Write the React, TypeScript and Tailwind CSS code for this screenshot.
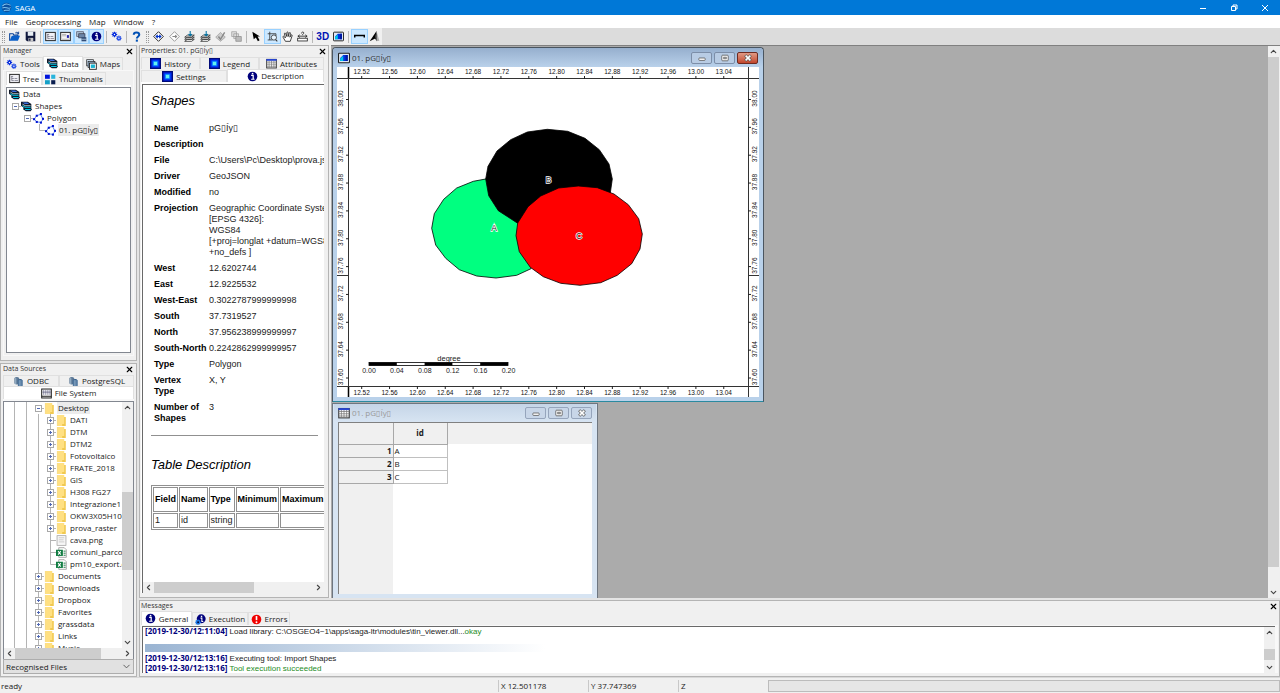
import React from "react";
import { ChevronDown, ChevronLeft, ChevronRight, ChevronUp, X } from "lucide-react";

const LAYER = "pG▯Íy▯";

type IconProps = { className?: string };
const I = ({ children, className = "size-[11px]" }: { children: React.ReactNode; className?: string }) => (
  <svg viewBox="0 0 16 16" className={`${className} shrink-0`} aria-hidden="true">{children}</svg>
);

/* ---------- icons ---------- */
const OpenIcon = () => (
  <I><path d="M1 14V4h5l1 2h6v2" fill="none" stroke="#003c96" strokeWidth="1.5" /><path d="M1 14l3-7h12l-3 7z" fill="#0a5fc8" /><path d="M9 3c2-2 4-1 5 1M14 1v3h-3" fill="none" stroke="#0a3c8c" strokeWidth="1.3" /></I>
);
const SaveIcon = () => (
  <I><path d="M1 1h14v14H3l-2-2z" fill="#10183c" /><path d="M4 1h8v6H4z" fill="#e8eef4" /><path d="M5 10h7v5H5z" fill="#c8c8c8" /><path d="M6 11h2v3H6z" fill="#10183c" /></I>
);
const TreeWinIcon = (p: IconProps) => (
  <I {...p}><rect x="1" y="2" width="14" height="12" fill="#f0f0f6" stroke="#222" strokeWidth="1.4" /><path d="M3 5h3M4 5v6h3M4 8h3M8 8h4M8 11h5" stroke="#667" fill="none" /></I>
);
const PropWinIcon = () => (
  <I><rect x="1" y="2" width="14" height="12" fill="#f4f4f4" stroke="#222" strokeWidth="1.4" /><path d="M3 5h6M3 7h6M3 12h10" stroke="#999" /><rect x="10" y="6" width="3" height="4" fill="#22a" /></I>
);
const SourceIcon = () => (
  <I><rect x="1" y="1" width="10" height="7" fill="#a8bcd0" stroke="#556" /><rect x="4" y="4" width="9" height="6" fill="#6d86a8" stroke="#334" /><path d="M8 9h7v6H8z" fill="#334e78" /><path d="M8 12h7" stroke="#cde" /></I>
);
const InfoIcon = () => (
  <I><circle cx="8" cy="8" r="7" fill="#00007c" /><path d="M6 6.5h3v5M6 12h5" stroke="#fff" strokeWidth="1.8" fill="none" /><rect x="7" y="2.7" width="2.2" height="2.2" fill="#fff" /></I>
);
const ExecIcon = () => (
  <I><circle cx="9" cy="7" r="6.5" fill="#00007c" /><path d="M8 6h2v5h2" stroke="#fff" strokeWidth="1.5" fill="none" /><rect x="8.500" y="2.500" width="2" height="2" fill="#fff" /><path d="M4.500 7.500l1.200 1.500 2-.3-.3 2L9 12l-1.600 1.300.3 2-2-.3-1.200 1.500L3 15l-2 .3.300-2L0 12l1.300-1.300-.3-2 2 .3z" fill="#1e78e6" /><circle cx="4.500" cy="12" r="1.300" fill="#003" /></I>
);
const ErrorIcon = () => (
  <I><circle cx="8" cy="8" r="7" fill="#f00000" /><path d="M8 3v6" stroke="#fff" strokeWidth="2.4" /><circle cx="8" cy="12" r="1.4" fill="#fff" /></I>
);
const CogsIcon = () => (
  <I>
    <path d="M5 1v8M1 5h8M2.200 2.200l5.600 5.600M7.800 2.200L2.200 7.800" stroke="#0028dc" strokeWidth="1.600" />
    <circle cx="5" cy="5" r="2.400" fill="#0028dc" />
    <circle cx="5" cy="5" r="1" fill="#fff" />
    <path d="M11.500 6.500v8M7.500 10.500h8M8.700 7.700l5.600 5.600M14.300 7.700l-5.600 5.600" stroke="#2850e6" strokeWidth="1.600" />
    <circle cx="11.500" cy="10.500" r="2.600" fill="#2850e6" />
    <circle cx="11.500" cy="10.500" r="1" fill="#fff" />
  </I>
);
const HelpIcon = () => (
  <I><path d="M4 5.500C4 1 12 1 12 5.500 12 8 8.500 8 8.500 11" fill="none" stroke="#0050b4" strokeWidth="3" /><rect x="7" y="12.500" width="3" height="3" fill="#0050b4" /></I>
);
const DiamondIcon = ({ active }: { active?: boolean }) => (
  <I><path d="M8 1l7 7-7 7-7-7z" fill="#fff" stroke={active ? "#222" : "#999"} strokeWidth="1.400" /><path d={active ? "M4.500 8h7M7 5.500L4.500 8 7 10.500M9 5.500l2.500 2.500L9 10.500" : "M5 8h6M9 6l2 2-2 2"} stroke={active ? "#0032c8" : "#888"} fill="none" strokeWidth="1.600" /></I>
);
const LayersArrowIcon = () => (
  <I><path d="M1 15l4-3h10l-4 3zM1 12l4-3h10l-4 3zM1 9l4-3h10l-4 3z" fill="#fff" stroke="#222" strokeWidth="1.100" /><path d="M9 0v7M6.500 4.500L9 7l2.500-2.500" stroke="#0070a0" strokeWidth="1.500" fill="none" /></I>
);
const CheckDiamondIcon = () => (
  <I><path d="M1 9l7-7 7 7-7 6z" fill="#ccc" stroke="#999" /><path d="M5 8l3 4 6-10" stroke="#888" strokeWidth="2" fill="none" /></I>
);
const CopyIcon = () => (
  <I><path d="M1 1h7v7H1zM4 4h7v7H4z" fill="#ddd" stroke="#999" /><path d="M7 8h8v7H7z" fill="#bbb" stroke="#888" /></I>
);
const PointerIcon = () => (
  <I><path d="M2 1l11 7H9.500l3 5.500-2.500 1.500-3-5.500L4 12z" fill="#000" /></I>
);
const ZoomIcon = () => (
  <I><path d="M4 1v12M1 4h12v3M1 13h7" stroke="#333" strokeWidth="1.200" fill="none" /><circle cx="10" cy="9.500" r="3.800" fill="#e6f4ff" stroke="#333" strokeWidth="1.200" /><path d="M12.500 12.500L15 15" stroke="#333" strokeWidth="1.600" /></I>
);
const HandIcon = () => (
  <I><path d="M5 15L1.500 9c-.5-1.500 1-2 2-.5L5 10 3.500 4c0-1.500 1.500-1.500 2 0L7 8V2.500c0-1.500 2-1.500 2 0V8l1.500-5c.5-1.300 2-1 1.800.4L11.500 9l1.700-3c.8-1 2-.4 1.500 1L12 15z" fill="#fff" stroke="#222" strokeWidth="1.200" /></I>
);
const MeasureIcon = () => (
  <I><rect x="1" y="10.500" width="14" height="4" fill="#fff" stroke="#222" strokeWidth="1.200" /><path d="M1 7.500h14M4 5.500l-2.500 2L4 9.500M12 5.500l2.500 2-2.500 2M6.500 3.500C6.500 1 10 1 10 3c0 1-2 1-2 3" fill="none" stroke="#222" strokeWidth="1.200" /></I>
);
const MapIcon = (p: IconProps) => (
  <I {...p}><rect x=".7" y="1.700" width="14.600" height="12.600" rx="1" fill="#dfe8f4" stroke="#222" strokeWidth="1.400" /><path d="M3 12V8l4-4h6v8z" fill="#0030e0" /><path d="M3 12V8.500L7 5v7z" fill="#00c8e8" /><path d="M10 4h3v8h-3z" fill="#0018a0" /></I>
);
const LineIcon = () => (
  <I><path d="M1 9.500v-3h14v3" stroke="#000" strokeWidth="2.200" fill="none" /></I>
);
const NorthIcon = () => (
  <I><path d="M11 0L1 15l8-4z" fill="#000" /><path d="M11 0v15l4-1z" fill="#b0b0b0" /><path d="M11 0v15l-2-4z" fill="#000" /></I>
);
const LayersIcon = () => (
  <I>
    <path d="M4 9h9l3 3-2 3H7l-4-3z" fill="#0c1c30" />
    <path d="M0 1h10l5 3.500V11H5.500L0 7z" fill="#101828" />
    <path d="M2 2h7l3 2.300H5.500z" fill="#3c6ee0" />
    <path d="M2 4.500l4 2.300h8" stroke="#e8f8ff" fill="none" />
    <path d="M2 6.800l4 2.400h8M6 12.500h8" stroke="#00c8e6" strokeWidth="1.500" fill="none" />
  </I>
);
const MapsIcon = () => (
  <I><rect x="1" y="1" width="10" height="9" fill="#cde" stroke="#222" /><rect x="3" y="3.500" width="10" height="9" fill="#9bd" stroke="#222" /><rect x="5" y="6" width="10" height="9" fill="#fff" stroke="#222" strokeWidth="1.300" /><rect x="7" y="8" width="6" height="5" fill="#1ab4d2" /></I>
);
const ThumbsIcon = () => (
  <I><rect x="0" y="1" width="7" height="6" fill="#0014dc" /><rect x="9" y="1" width="6" height="6" fill="#28b4dc" /><rect x="0" y="9" width="7" height="6" fill="#14a0c8" /><rect x="9" y="9" width="6" height="6" fill="#0a1e50" /></I>
);
const PolygonIcon = () => (
  <I><path d="M2 9l3-5 6-2 3.500 7-3 4.500L5.500 13z" fill="#fff" stroke="#5a86ee" strokeWidth="1.400" /><g fill="#0014d2"><rect x="0" y="7.500" width="3" height="3" /><rect x="4" y="2.500" width="3" height="3" /><rect x="10" y="0" width="3" height="3" /><rect x="13" y="7" width="3" height="3" /><rect x="10" y="12.500" width="3" height="3" /><rect x="4" y="11.500" width="3" height="3" /></g></I>
);
const SquareIcon = () => (
  <I><rect x="1" y="1" width="14" height="14" fill="#0028f0" stroke="#000a78" strokeWidth="2" /><rect x="4" y="4" width="8" height="8" fill="#0078ff" /><rect x="5.500" y="5.500" width="5" height="5" fill="#64f0f0" /></I>
);
const GridIcon = (p: IconProps) => (
  <I {...p}><rect x="1" y="2" width="14" height="12.500" fill="#fff" stroke="#333" strokeWidth="1.400" /><path d="M1 6h14M1 9h14M1 12h14M4.500 4v10M8 4v10M11.500 4v10" stroke="#777" /><path d="M.5 2.800h15" stroke="#2846d2" strokeWidth="2.600" /></I>
);
const DbIcon = () => (
  <I><path d="M2 3c2-2 5-2 7 0v8c-2 2-5 2-7 0z" fill="#5c7896" /><path d="M7 6c2-2 5-2 7 0v8c-2 2-5 2-7 0z" fill="#2e5a88" /><path d="M4 3v9M9 6v9M11.500 6v9" stroke="#c8dceb" /></I>
);
const FsIcon = () => (
  <I><rect x="1" y="1.500" width="14" height="13" fill="#fff" stroke="#222" strokeWidth="1.500" /><path d="M4 3v7M7 3v7M10 3v7M13 3v7M2 6h12" stroke="#557" /><path d="M1 12h14" stroke="#222" strokeWidth="1.500" /></I>
);
const FolderIcon = () => (
  <I><path d="M2 0h10v3h2v13H2z" fill="#ffe082" /><path d="M12 3h2v13H9v-3h3z" fill="#f0c850" /><path d="M2 0v16" stroke="#f5d46e" /></I>
);
const FileIcon = () => (
  <I><rect x="1.500" y="1" width="13" height="14" fill="#f6f6f6" stroke="#999" /><path d="M4 4h8M4 7h7M4 10h8" stroke="#bbb" /></I>
);
const XlsIcon = () => (
  <I><path d="M4 1h8l3 3v11H4z" fill="#fff" stroke="#888" /><path d="M11 6h3M11 9h3M11 12h3" stroke="#1e7846" strokeWidth="1.400" /><rect x="0" y="4" width="10" height="9" fill="#107c41" /><path d="M3 6l4 5M7 6l-4 5" stroke="#fff" strokeWidth="1.500" /></I>
);
const SagaIcon = () => (
  <I><circle cx="8" cy="8" r="7" fill="#0a50a0" /><path d="M2 6c4-5 9-3 12-1M2 9c4-4 8 3 12-1M4 13c3-3 6 1 9-2" stroke="#7fc4f0" strokeWidth="1.500" fill="none" /></I>
);

/* ---------- small building blocks ---------- */
const ToolButton = ({ label, on, children }: { label: string; on?: boolean; children: React.ReactNode }) => (
  <button aria-label={label} aria-pressed={on} className={`flex flex-1 items-center justify-center ${on ? "border border-[#99d1ff] bg-[#cce8ff]" : ""}`}>{children}</button>
);
const Sep = () => <div className="mx-0.5 h-3 w-px shrink-0 bg-[#b8b8b8]" />;
const Grip = () => <div className="mx-0.5 h-3 w-[3px] shrink-0 border-x border-dotted border-[#999]" />;

const Tab = ({ icon, label, on, className = "" }: { icon: React.ReactNode; label: string; on?: boolean; className?: string }) => (
  <button role="tab" aria-selected={!!on} className={`flex items-center justify-center gap-[3px] whitespace-nowrap border border-b-0 border-[#e0e0e0] px-0.5 ${on ? "bg-white" : "bg-[#f0f0f0]"} ${className}`}>
    {icon}
    {label}
  </button>
);

const Caption = ({ children }: { children: React.ReactNode }) => (
  <div className="flex h-[10px] shrink-0 items-center justify-between text-[7px] leading-[10px] text-[#333]">
    <span>{children}</span>
    <button aria-label="Close panel"><X className="size-[9px] text-black" strokeWidth={3} /></button>
  </div>
);

const VScroll = ({ before, thumb, after }: { before: string; thumb: string; after: string }) => (
  <div className="flex w-[11px] shrink-0 flex-col items-center bg-[#f0f0f0] text-[#444]">
    <ChevronUp className="my-px size-[9px] shrink-0" strokeWidth={3} />
    <div className={before} />
    <div className={`w-full bg-[#cdcdcd] ${thumb}`} />
    <div className={after} />
    <ChevronDown className="my-px size-[9px] shrink-0" strokeWidth={3} />
  </div>
);
const HScroll = ({ thumb }: { thumb: string }) => (
  <div className="flex h-[11px] shrink-0 items-center bg-[#f0f0f0] text-[#444]">
    <ChevronLeft className="mx-px size-[9px] shrink-0" strokeWidth={3} />
    <div className="flex h-full flex-1"><div className={`h-full bg-[#cdcdcd] ${thumb}`} /></div>
    <ChevronRight className="mx-px size-[9px] shrink-0" strokeWidth={3} />
  </div>
);

type Cell = "none" | "line" | "plus" | "minus" | "tee" | "end";
const TreeCell = ({ kind }: { kind: Cell }) => (
  <svg viewBox="0 0 12 12" className="size-3 shrink-0" aria-hidden="true">
    {kind !== "none" && <path d={kind === "end" ? "M6.500 0v6.500H12" : kind === "line" ? "M6.500 0v12" : kind === "minus" ? "M6.500 6.500H12" : "M6.500 0v12M6.500 6.500H12"} stroke="#b4b4b4" fill="none" />}
    {(kind === "plus" || kind === "minus") && (
      <>
        <rect x="3.500" y="3.500" width="6" height="6" fill="#fff" stroke="#a8a8a8" />
        <path d={kind === "plus" ? "M5 6.500h3M6.500 5v3" : "M5 6.500h3"} stroke="#5068b4" />
      </>
    )}
  </svg>
);
const TreeRow = ({ cells, icon, label, sel }: { cells: Cell[]; icon: React.ReactNode; label: string; sel?: boolean }) => (
  <li role="treeitem" aria-selected={!!sel} className="flex h-3 items-center whitespace-nowrap">
    {cells.map((c, i) => <TreeCell key={i} kind={c} />)}
    {icon}
    <span className={`ml-0.5 px-px leading-3 ${sel ? "bg-[#ececec]" : ""}`}>{label}</span>
  </li>
);

/* ---------- manager ---------- */
const Manager = () => (
  <section className="flex min-h-0 flex-1 flex-col border border-[#b4b4b4] px-0.5 pb-1">
    <Caption>Manager</Caption>
    <div role="tablist" className="flex h-[14px] items-stretch">
      <Tab icon={<CogsIcon />} label="Tools" className="mt-px w-10" />
      <Tab on icon={<LayersIcon />} label="Data" className="w-10" />
      <Tab icon={<MapsIcon />} label="Maps" className="mt-px w-10" />
    </div>
    <div className="flex min-h-0 flex-1 flex-col border border-[#f8f8f8] px-0.5 pb-0.5">
      <div role="tablist" className="flex h-[14px] items-stretch">
        <Tab on icon={<TreeWinIcon />} label="Tree" className="w-9" />
        <Tab icon={<ThumbsIcon />} label="Thumbnails" className="mt-px" />
      </div>
      <div className="flex-1 bg-white pt-0.5">
        <ul role="tree" className="h-full border border-[#828790] bg-white pl-0.5">
          <TreeRow cells={[]} icon={<LayersIcon />} label="Data" />
          <TreeRow cells={["minus"]} icon={<LayersIcon />} label="Shapes" />
          <TreeRow cells={["none", "minus"]} icon={<PolygonIcon />} label="Polygon" />
          <TreeRow cells={["none", "none", "end"]} icon={<PolygonIcon />} label={`01. ${LAYER}`} sel />
        </ul>
      </div>
    </div>
  </section>
);

/* ---------- data sources ---------- */
const FOLDERS = ["DATI", "DTM", "DTM2", "Fotovoltaico", "FRATE_2018", "GIS", "H308 FG27", "Integrazione1", "OKW3X05H10", "prova_raster"];
const ROOTS = ["Documents", "Downloads", "Dropbox", "Favorites", "grassdata", "Links", "Music"];

const DataSources = () => (
  <section className="flex min-h-0 flex-1 flex-col border border-[#b4b4b4] px-0.5 pb-0.5">
    <Caption>Data Sources</Caption>
    <div role="tablist" className="flex h-3 shrink-0 pt-px">
      <Tab icon={<DbIcon />} label="ODBC" className="w-14" />
      <Tab icon={<DbIcon />} label="PostgreSQL" className="flex-1" />
    </div>
    <Tab on icon={<FsIcon />} label="File System" className="h-[13px] w-full shrink-0" />
    <div className="flex min-h-0 flex-1 flex-col bg-[#f8f8f8] pt-0.5">
      <div className="flex min-h-0 flex-1 flex-col border border-b-0 border-[#828790] bg-white">
        <div className="flex min-h-0 flex-1">
          <ul role="tree" className="min-w-0 flex-1 overflow-hidden pl-1">
            <TreeRow cells={["line", "line", "minus"]} icon={<FolderIcon />} label="Desktop" sel />
            {FOLDERS.map((f) => <TreeRow key={f} cells={["line", "line", "line", "plus"]} icon={<FolderIcon />} label={f} />)}
            <TreeRow cells={["line", "line", "line", "tee"]} icon={<FileIcon />} label="cava.png" />
            <TreeRow cells={["line", "line", "line", "tee"]} icon={<XlsIcon />} label="comuni_parco.csv" />
            <TreeRow cells={["line", "line", "line", "end"]} icon={<XlsIcon />} label="pm10_export.csv" />
            {ROOTS.map((f) => <TreeRow key={f} cells={["line", "line", "plus"]} icon={<FolderIcon />} label={f} />)}
          </ul>
          <VScroll before="grow-[78]" thumb="grow-[77]" after="grow-[66]" />
        </div>
        <HScroll thumb="w-4/5" />
      </div>
      <div className="relative shrink-0">
        <select aria-label="File filter" className="h-[15px] w-full appearance-none border border-[#adadad] bg-[#e1e1e1] pl-0.5 text-[8px] leading-3">
          <option>Recognised Files</option>
        </select>
        <ChevronDown className="pointer-events-none absolute right-0.5 top-0.5 size-[11px] text-[#555]" strokeWidth={2} />
      </div>
    </div>
  </section>
);

/* ---------- properties ---------- */
const PROPS: [string, string[]][] = [
  ["Name", [LAYER]],
  ["Description", []],
  ["File", ["C:\\Users\\Pc\\Desktop\\prova.json"]],
  ["Driver", ["GeoJSON"]],
  ["Modified", ["no"]],
  ["Projection", ["Geographic Coordinate System", "[EPSG 4326]:", "WGS84", "[+proj=longlat +datum=WGS84", "+no_defs ]"]],
  ["West", ["12.6202744"]],
  ["East", ["12.9225532"]],
  ["West-East", ["0.3022787999999998"]],
  ["South", ["37.7319527"]],
  ["North", ["37.956238999999997"]],
  ["South-North", ["0.2242862999999957"]],
  ["Type", ["Polygon"]],
  ["Vertex\nType", ["X, Y"]],
  ["Number of\nShapes", ["3"]],
];

const Properties = () => (
  <section className="flex w-[190px] shrink-0 flex-col border border-[#b4b4b4] px-px pb-1">
    <Caption>{`Properties: 01. ${LAYER}`}</Caption>
    <div className="flex min-h-0 flex-1 flex-col pr-[3px]">
      <div role="tablist" className="flex h-[13px] shrink-0 pt-px">
        <Tab icon={<SquareIcon />} label="History" className="w-[59px]" />
        <Tab icon={<SquareIcon />} label="Legend" className="w-[59px]" />
        <Tab icon={<GridIcon />} label="Attributes" className="flex-1" />
      </div>
      <div role="tablist" className="flex h-[13px] shrink-0">
        <Tab icon={<SquareIcon />} label="Settings" className="mt-px w-[86px]" />
        <Tab on icon={<InfoIcon />} label="Description" className="flex-1" />
      </div>
      <div className="flex min-h-0 flex-1 flex-col bg-white pl-px pt-0.5">
        <div className="flex min-h-0 flex-1 flex-col border-l border-t border-[#696969] font-['Liberation_Sans',Arial,sans-serif] text-[9px] leading-[11px] text-[#222]">
          <div className="min-h-0 flex-1 overflow-hidden pl-2 pt-2">
            <h2 className="mb-3 text-[13px] italic leading-4 text-black">Shapes</h2>
            <table>
              <tbody>
                {PROPS.map(([k, lines]) => (
                  <tr key={k}>
                    <th scope="row" className="w-[58px] min-w-[58px] whitespace-pre pb-[3px] pl-[3px] pt-0.5 text-left align-top font-bold text-black">{k}</th>
                    <td className="whitespace-nowrap pb-[3px] pt-0.5 align-top">
                      {lines.map((l) => <div key={l}>{l}</div>)}
                    </td>
                  </tr>
                ))}
              </tbody>
            </table>
            <hr className="mb-[21px] mr-1.5 mt-2 border-[#909090]" />
            <h2 className="mb-3 text-[13px] italic leading-4 text-black">Table Description</h2>
            <table className="border-separate border-spacing-[1px] border border-[#909090] text-left">
              <thead>
                <tr className="h-[25px] text-black">
                  {["Field", "Name", "Type", "Minimum", "Maximum"].map((h) => (
                    <th key={h} scope="col" className="border border-[#909090] px-px font-bold">{h}</th>
                  ))}
                </tr>
              </thead>
              <tbody>
                <tr className="h-[15px]">
                  {["1", "id", "string", "", ""].map((c, i) => (
                    <td key={i} className="border border-[#909090] px-px">{c}</td>
                  ))}
                </tr>
              </tbody>
            </table>
          </div>
          <HScroll thumb="w-[100px]" />
        </div>
      </div>
    </div>
  </section>
);

/* ---------- map window ---------- */
const LONS = ["12.52", "12.56", "12.60", "12.64", "12.68", "12.72", "12.76", "12.80", "12.84", "12.88", "12.92", "12.96", "13.00", "13.04"];
const LATS = ["38.00", "37.96", "37.92", "37.88", "37.84", "37.80", "37.76", "37.72", "37.68", "37.64", "37.60"];
const SCALE = ["0.00", "0.04", "0.08", "0.12", "0.16", "0.20"];
const STEP = 27.85;

const MapCanvas = () => (
  <svg viewBox="337 67 422 330" className="block w-full bg-white font-['Liberation_Sans',Arial,sans-serif]" role="img" aria-label="Polygon map">
    <path d="M348.500 67V397M748.500 67V397M337 78.500H759M337 386.500H759M337 275.500h11M748 275.500h11" stroke="#333" fill="none" />
    <path d="M348.500 67v11M348.500 387v10" stroke="#000" strokeWidth="1.500" />
    <g fontSize="6.500" fill="#111" textAnchor="middle">
      {LONS.map((l, i) => {
        const x = 361.7 + i * STEP;
        return (
          <g key={l}>
            <text x={x} y="73.500">{l}</text>
            <text x={x} y="395">{l}</text>
            <path d={`M${x} 76v3M${x} 386v3`} stroke="#222" />
          </g>
        );
      })}
      {LATS.map((l, i) => {
        const y = 99.5 + i * STEP;
        return (
          <g key={l}>
            <text transform={`translate(343 ${y - 1}) rotate(-90)`}>{l}</text>
            <text transform={`translate(757 ${y - 1}) rotate(-90)`}>{l}</text>
            <path d={`M346 ${y}h3M748 ${y}h3`} stroke="#222" />
          </g>
        );
      })}
    </g>
    <g stroke="#000" strokeWidth=".8">
      <path fill="#00ff80" d="M485.700 179L473.300 181.300 456.700 188 443.700 199.300 434.300 213.700 431.700 228.300 435.700 245 445.700 258.300 459.300 269.700 476.700 276 496 278 516.700 275.300 531 268.700 540 240 520 200z" />
      <path fill="#000" d="M485.700 179L488 166.300 497 151 510.700 139.700 527.300 132 547.300 129.300 567.700 131.300 585 138.300 599.300 149.700 609 164 612.300 179 610.300 193 580 215 517.300 223 498.300 210.700 488.700 195.700z" />
      <path fill="#f00" d="M517.700 223L528 206.700 540.700 196 558.700 188 578.300 186 597.300 187.700 614 194 628.300 204.700 638.700 218.700 642.300 234 640 249 631.700 263.700 617.300 275.300 600.700 282.700 580 285.300 560.700 283.300 543.300 276.700 530.300 267.300 519.300 251.700 516 235.700z" />
    </g>
    <g fontSize="8.500" textAnchor="middle" fill="#222" stroke="#fff" strokeWidth="1.400" paintOrder="stroke">
      <text x="494" y="231">A</text>
      <text x="548.500" y="183">B</text>
      <text x="579" y="239">C</text>
    </g>
    <g fontSize="7" textAnchor="middle" fill="#222">
      <text x="449" y="360.500" fontSize="7.500">degree</text>
      <rect x="369" y="362.500" width="139" height="3" fill="#fff" stroke="#000" strokeWidth=".8" />
      {[0, 2, 4].map((i) => <rect key={i} x={369 + i * 27.8} y="362.500" width="27.800" height="3" fill="#000" />)}
      {SCALE.map((s, i) => <text key={s} x={369 + i * 27.9} y="373">{s}</text>)}
    </g>
  </svg>
);

const WinButtons = ({ active }: { active?: boolean }) => (
  <div className="flex gap-0.5">
    {["Minimize", "Restore", "Close"].map((n) => (
      <button
        key={n}
        aria-label={n}
        className={`flex h-3 w-[21px] items-center justify-center rounded-xs border ${active && n === "Close" ? "border-[#6e2a20] bg-linear-to-b from-[#e09a86] to-[#c2452b]" : active ? "border-[#7c8ea8] bg-[#b8cce4]" : "border-[#96a5bc] bg-[#c8d6e8]"}`}
      >
        <svg viewBox="0 0 12 10" className="h-2 w-[10px]" aria-hidden="true">
          {n === "Minimize" && <rect x="2" y="5" width="8" height="3" rx="1" fill="#fff" stroke="#555" />}
          {n === "Restore" && <><rect x="2" y="1.500" width="8" height="7" rx="1" fill="#fff" stroke="#555" /><rect x="4.500" y="4" width="3" height="2" fill="#fff" stroke="#555" /></>}
          {n === "Close" && <><path d="M2.500 1.500l7 7M9.500 1.500l-7 7" stroke="#555" strokeWidth="3.600" /><path d="M3 2l6 6M9 2L3 8" stroke="#fff" strokeWidth="2" /></>}
        </svg>
      </button>
    ))}
  </div>
);

const MapWindow = () => (
  <div className="absolute left-px top-px z-10 flex w-[432px] flex-col rounded-t border border-[#4a5560] border-b-[#2a8aa0] bg-[#b9d1ea] px-1 pb-1">
    <div className="-mx-1 flex h-[19px] items-center gap-0.5 rounded-t bg-linear-to-b from-[#96afce] to-[#b9d1ea] px-[5px] text-[#333]">
      <MapIcon className="size-3" />
      <span className="flex-1">{`01. ${LAYER}`}</span>
      <WinButtons active />
    </div>
    <MapCanvas />
  </div>
);

/* ---------- attribute table window ---------- */
const TableWindow = () => (
  <div className="absolute bottom-0 left-px top-[357px] flex w-[266px] flex-col border border-b-0 border-[#6e7680] bg-[#d7e4f2] px-[5px] pb-1">
    <div className="-mx-1 flex h-[18px] shrink-0 items-center gap-0.5 bg-linear-to-b from-[#c5d5e7] to-[#d7e4f2] px-1 text-[#999]">
      <GridIcon className="size-3" />
      <span className="flex-1">{`01. ${LAYER}`}</span>
      <WinButtons />
    </div>
    <div className="flex min-h-0 flex-1 flex-col border-l border-t border-[#808080] bg-white">
      <table className="w-full table-fixed border-collapse">
        <thead>
          <tr className="h-[21px] bg-[#f0f0f0]">
            <td className="w-[54px] border border-l-0 border-t-0 border-[#a8a8a8]" />
            <th scope="col" className="w-[54px] border border-t-0 border-[#a8a8a8] font-bold">id</th>
            <td />
          </tr>
        </thead>
        <tbody>
          {["A", "B", "C"].map((v, i) => (
            <tr key={v} className="h-3">
              <th scope="row" className="border border-l-0 border-[#a8a8a8] bg-[#f0f0f0] pr-px text-right font-bold leading-3">{i + 1}</th>
              <td className="border border-[#c0c0c0] pl-px leading-3">{v}</td>
              <td />
            </tr>
          ))}
        </tbody>
      </table>
      <div className="w-[54px] flex-1 bg-[#f0f0f0]" />
    </div>
  </div>
);

/* ---------- messages ---------- */
const Stamp = ({ t }: { t: string }) => <b className="font-['Open_Sans',sans-serif] text-[#00007c]">[{t}]</b>;

const Messages = () => (
  <section className="flex h-[77px] shrink-0 flex-col border border-[#b4b4b4] px-px pb-[3px]">
    <Caption>Messages</Caption>
    <div role="tablist" className="flex h-[14px] shrink-0">
      <Tab on icon={<InfoIcon />} label="General" className="w-[51px]" />
      <Tab icon={<ExecIcon />} label="Execution" className="mt-px w-14" />
      <Tab icon={<ErrorIcon />} label="Errors" className="mt-px w-[42px]" />
    </div>
    <div className="flex min-h-0 flex-1 flex-col bg-[#f8f8f8] pl-px pr-[3px] pt-px">
      <div className="flex min-h-0 flex-1 border-l border-t border-[#696969] bg-white">
        <div className="flex min-w-0 flex-1 flex-col justify-end overflow-hidden whitespace-nowrap pl-0.5 font-['Liberation_Sans',Arial,sans-serif] leading-[9px]">
          <div><Stamp t="2019-12-30/12:11:04" /> Load library: C:\OSGEO4~1\apps\saga-ltr\modules\tin_viewer.dll...<span className="text-[#1e8c1e]">okay</span></div>
          <div className="mb-px mt-2 h-2 w-[400px] shrink-0 bg-linear-to-r from-[#9ab4d2] to-white" />
          <div><Stamp t="2019-12-30/12:13:16" /> Executing tool: Import Shapes</div>
          <div><Stamp t="2019-12-30/12:13:16" /> <span className="text-[#1e8c1e]">Tool execution succeeded</span></div>
        </div>
        <VScroll before="grow-[11]" thumb="grow-[11]" after="grow-[2]" />
      </div>
    </div>
  </section>
);

export default function App() {
  return (
    <div className="flex h-screen min-w-0 flex-col overflow-hidden bg-[#f0f0f0] font-['Open_Sans','DejaVu_Sans',sans-serif] text-[8px] leading-3 text-[#1a1a1a]">
      <header className="flex h-[15px] shrink-0 items-center gap-0.5 bg-[#0078d7] pl-px text-white">
        <SagaIcon />
        <h1 className="flex-1 pl-px">SAGA</h1>
        <div className="flex h-full">
          {["Minimize", "Restore", "Close"].map((n) => (
            <button key={n} aria-label={n} className="flex w-[31px] items-center justify-center">
              <svg viewBox="0 0 8 8" className="size-2" fill="none" stroke="#fff" aria-hidden="true">
                {n === "Minimize" && <path d="M1 4.500h6" />}
                {n === "Restore" && <path d="M1.500 2.500h4v4h-4zM3 2V1h4v4H6" />}
                {n === "Close" && <path d="M1 1l6 6M7 1L1 7" />}
              </svg>
            </button>
          ))}
        </div>
      </header>

      <nav className="flex h-[13px] shrink-0 items-center gap-2 bg-white pl-[5px]">
        {["File", "Geoprocessing", "Map", "Window", "?"].map((m) => <button key={m}>{m}</button>)}
      </nav>

      <div className="flex h-[17px] shrink-0 bg-[#dcdcdc]">
        <div className="flex items-center bg-[#f0f0f0]" role="toolbar" aria-label="Main toolbar">
          <Grip />
          <div className="flex h-[15px] w-[31px]"><ToolButton label="Open"><OpenIcon /></ToolButton><ToolButton label="Save"><SaveIcon /></ToolButton></div>
          <Sep />
          <div className="flex h-[15px] w-[61px]">
            <ToolButton on label="Manager"><TreeWinIcon /></ToolButton>
            <ToolButton on label="Properties"><PropWinIcon /></ToolButton>
            <ToolButton on label="Data sources"><SourceIcon /></ToolButton>
            <ToolButton on label="Messages"><InfoIcon /></ToolButton>
          </div>
          <Sep />
          <div className="flex h-[15px] w-[15px]"><ToolButton label="Find tool"><CogsIcon /></ToolButton></div>
          <Sep />
          <div className="flex h-[15px] w-[15px]"><ToolButton label="Help"><HelpIcon /></ToolButton></div>
          <Grip />
          <div className="flex h-[15px] w-[93px]">
            <ToolButton label="Previous extent"><DiamondIcon active /></ToolButton>
            <ToolButton label="Next extent"><DiamondIcon /></ToolButton>
            <ToolButton label="Full extent"><LayersArrowIcon /></ToolButton>
            <ToolButton label="Layer extent"><LayersArrowIcon /></ToolButton>
            <ToolButton label="Selection extent"><CheckDiamondIcon /></ToolButton>
            <ToolButton label="Synchronize extents"><CopyIcon /></ToolButton>
          </div>
          <Sep />
          <div className="flex h-[15px] w-[61px]">
            <ToolButton label="Action"><PointerIcon /></ToolButton>
            <ToolButton on label="Zoom"><ZoomIcon /></ToolButton>
            <ToolButton label="Pan"><HandIcon /></ToolButton>
            <ToolButton label="Measure"><MeasureIcon /></ToolButton>
          </div>
          <Sep />
          <div className="flex h-[15px] w-[31px]">
            <ToolButton label="3D view"><span className="font-['Liberation_Sans',Arial,sans-serif] text-[10px] font-bold text-[#0014b4]">3D</span></ToolButton>
            <ToolButton label="Print layout"><MapIcon /></ToolButton>
          </div>
          <Sep />
          <div className="flex h-[15px] w-[31px]">
            <ToolButton on label="Scale bar"><LineIcon /></ToolButton>
            <ToolButton label="North arrow"><NorthIcon /></ToolButton>
          </div>
        </div>
      </div>

      <main className="flex min-h-0 flex-1 gap-0.5 bg-[#e4e4e4]">
        <div className="flex w-[137px] shrink-0 flex-col gap-0.5 *:bg-[#f0f0f0]">
          <Manager />
          <DataSources />
        </div>
        <div className="flex min-w-0 flex-1 flex-col gap-0.5 *:bg-[#f0f0f0]">
          <div className="flex min-h-0 flex-1 gap-0.5">
            <Properties />
            <div className="flex min-w-0 flex-1 border-t border-[#808080] pr-px">
              <div className="relative min-w-0 flex-1 overflow-hidden bg-[#ababab]">
                <MapWindow />
                <TableWindow />
              </div>
              <VScroll before="grow-0" thumb="grow-[510]" after="grow-[20]" />
            </div>
          </div>
          <Messages />
        </div>
      </main>

      <footer className="flex h-4 shrink-0 items-center border-t border-[#d8d8d8]">
        <span className="flex-1 pl-px">ready</span>
        <div className="flex w-[782px] items-center">
          <span className="w-[90px] border-l border-[#c8c8c8] pl-0.5">X 12.501178</span>
          <span className="w-[90px] border-l border-[#c8c8c8] pl-0.5">Y 37.747369</span>
          <span className="w-[90px] border-l border-[#c8c8c8] pl-0.5">Z</span>
          <div className="h-3 flex-1 border border-[#bcbcbc] bg-[#e6e6e6]" />
        </div>
      </footer>
    </div>
  );
}
